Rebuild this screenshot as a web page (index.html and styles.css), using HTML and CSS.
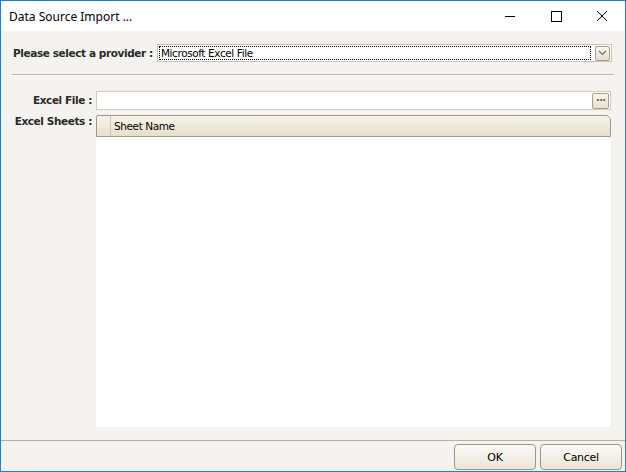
FILE: index.html
```html
<!DOCTYPE html>
<html lang="en">
<head>
    <meta charset="UTF-8">
    <title>Data Source Import ...</title>
    <link rel="stylesheet" href="styles.css">
</head>
<body>
    <div class="window">
        <div class="titlebar">
            <span class="title">Data Source Import ...</span>
            <div class="caption-buttons">
                <span class="cap-btn">
                    <svg width="12" height="12" viewBox="0 0 12 12"><path d="M1 6.5H11" stroke="#000" stroke-width="1"/></svg>
                </span>
                <span class="cap-btn">
                    <svg width="12" height="12" viewBox="0 0 12 12"><rect x="1.5" y="1.5" width="10" height="10" fill="none" stroke="#000" stroke-width="1"/></svg>
                </span>
                <span class="cap-btn">
                    <svg width="12" height="12" viewBox="0 0 12 12"><path d="M1 1L11 11M11 1L1 11" stroke="#000" stroke-width="1"/></svg>
                </span>
            </div>
        </div>

        <div class="content">
            <div class="provider-row">
                <label class="field-label">Please select a provider :</label>
                <div class="combo">
                    <span class="combo-text">Microsoft Excel File</span>
                    <span class="mini-btn">
                        <svg width="9" height="6" viewBox="0 0 9 6"><path d="M1 1L4.5 4.5L8 1" fill="none" stroke="#7a6f5c" stroke-width="1.2"/></svg>
                    </span>
                </div>
            </div>

            <div class="separator"></div>

            <div class="form-grid">
                <label class="field-label">Excel File :</label>
                <div class="textbox">
                    <span class="mini-btn dots">&middot;&middot;&middot;</span>
                </div>

                <label class="field-label">Excel Sheets :</label>
                <div class="sheet-grid">
                    <div class="grid-header">
                        <div class="row-head"></div>
                        <div class="col-head">Sheet Name</div>
                    </div>
                    <div class="grid-body"></div>
                </div>
            </div>
        </div>

        <div class="footer">
            <button class="dlg-btn">OK</button>
            <button class="dlg-btn">Cancel</button>
        </div>
    </div>
</body>
</html>
```

FILE: styles.css
```css
* {
    box-sizing: border-box;
}

body {
    margin: 0;
    font-family: 'DejaVu Sans', sans-serif;
    font-size: 11px;
    background: #fff;
}

.window {
    width: 626px;
    height: 472px;
    border: 1px solid #1883d7;
    display: flex;
    flex-direction: column;
    background: #f4f3ef;
}

.titlebar {
    height: 30px;
    background: #fff;
    display: flex;
    align-items: center;
    justify-content: space-between;
    padding-left: 8px;
}

.title {
    font-family: 'Noto Sans', sans-serif;
    font-size: 12px;
    color: #000;
}

.caption-buttons {
    display: flex;
    height: 100%;
}

.cap-btn {
    width: 46px;
    display: flex;
    align-items: center;
    justify-content: center;
}

.content {
    flex: 1;
    padding: 13px 13px 0 10px;
}

.field-label {
    font-weight: bold;
    color: #2a2a2a;
    font-size: 10.5px;
    letter-spacing: -0.4px;
    white-space: nowrap;
}

.provider-row {
    display: flex;
    align-items: center;
    gap: 4px;
    padding-left: 2px;
}

.combo {
    flex: 1;
    height: 18px;
    background: #fff;
    border: 1px solid #c9c1b1;
    display: flex;
    align-items: center;
    justify-content: space-between;
    padding: 1px;
}

.combo-text {
    flex: 1;
    height: 14px;
    border: 1px dotted #000;
    margin-right: 4px;
    padding-left: 1px;
    line-height: 12px;
    font-family: 'DejaVu Sans', sans-serif;
    font-size: 10.5px;
    letter-spacing: -0.4px;
    color: #000;
}

.mini-btn {
    width: 15px;
    height: 15px;
    border: 1px solid #a89d8a;
    border-radius: 2px;
    background: linear-gradient(#f8f6ef, #e6dfcf);
    display: flex;
    align-items: center;
    justify-content: center;
}

.mini-btn.dots {
    font-size: 11px;
    font-weight: bold;
    color: #7a6f5c;
    letter-spacing: -1px;
    line-height: 1;
}

.separator {
    height: 2px;
    background: #c2b7a8;
    border-bottom: 1px solid #f9f8f5;
    margin: 12px -2px 15px 1px;
}

.form-grid {
    display: grid;
    grid-template-columns: 81px 515px;
    column-gap: 4px;
    row-gap: 5px;
    align-items: start;
}

.form-grid .field-label {
    text-align: right;
}

.form-grid .field-label:first-child {
    line-height: 18px;
}

.textbox {
    height: 19px;
    background: #fff;
    border: 1px solid #d3ccbe;
    display: flex;
    justify-content: flex-end;
    align-items: center;
    padding-right: 1px;
}

.textbox .mini-btn {
    width: 17px;
    height: 16px;
}

.sheet-grid {
    height: 312px;
    display: flex;
    flex-direction: column;
    background: #fff;
}

.grid-header {
    height: 22px;
    display: flex;
    border: 1px solid #a49782;
    border-top-right-radius: 5px;
    border-top-left-radius: 2px;
    background: linear-gradient(#f6f3ea, #e6dfcb);
    overflow: hidden;
}

.row-head {
    width: 14px;
    border-right: 1px solid #cfc6b4;
}

.col-head {
    flex: 1;
    padding-left: 3px;
    line-height: 20px;
    font-family: 'DejaVu Sans', sans-serif;
    font-size: 10.5px;
    letter-spacing: -0.4px;
    color: #000;
}

.grid-body {
    flex: 1;
    background: #fff;
}

.footer {
    height: 31px;
    border-top: 1px solid #bcaf9c;
    display: flex;
    justify-content: flex-end;
    gap: 4px;
    padding: 3px 3px 0 0;
}

.dlg-btn {
    width: 82px;
    height: 26px;
    border: 1px solid #9e9483;
    border-radius: 4px;
    background: linear-gradient(#fbfaf6, #ebe5d7);
    font-family: 'DejaVu Sans', sans-serif;
    font-size: 11px;
    letter-spacing: -0.3px;
    color: #000;
    padding: 0;
}
```
